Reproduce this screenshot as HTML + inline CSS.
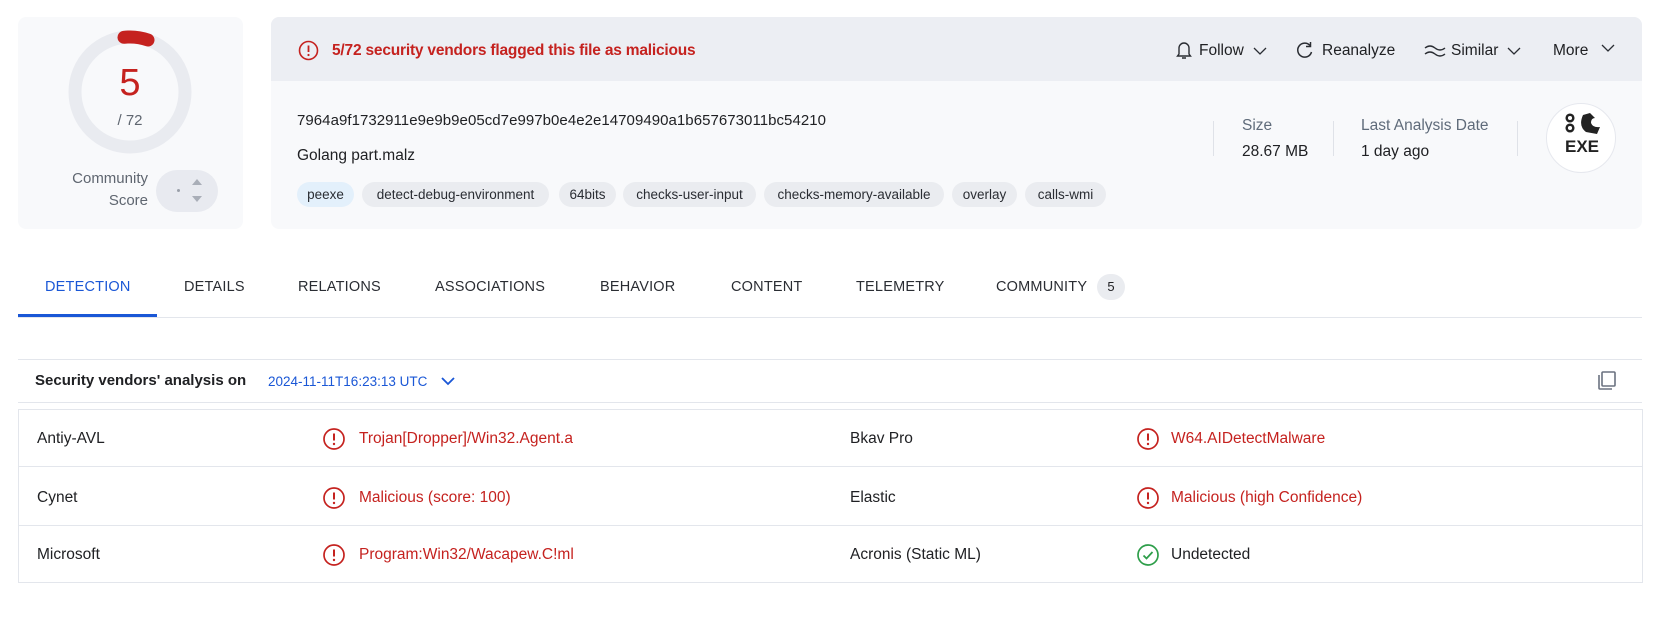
<!DOCTYPE html>
<html><head><meta charset="utf-8"><style>
*{margin:0;padding:0;box-sizing:border-box}
body{width:1662px;height:630px;background:#fff;font-family:"Liberation Sans",sans-serif;color:#202124;position:relative;overflow:hidden;font-size:14.5px}
.a{position:absolute;white-space:nowrap}
.card{position:absolute;background:#f8f9fb;border-radius:8px}
.tag{position:absolute;top:182px;height:25px;line-height:25px;border-radius:13px;background:#eaecf0;font-size:13.5px;text-align:center;color:#2a2d33}
.tab{position:absolute;top:279px;font-size:14.5px;color:#2a2d33;letter-spacing:.2px}
.hl{position:absolute;height:1px;background:#e3e6ec}
.red{color:#c5221f}
</style></head><body>

<div class="card" style="left:18px;top:17px;width:225px;height:212px"></div>
<svg class="a" style="left:60px;top:22px" width="140" height="140" viewBox="0 0 140 140">
<circle cx="70" cy="70" r="55" fill="none" stroke="#e9ebf0" stroke-width="13"/>
<path d="M64 15.3 A55 55 0 0 1 88 18" fill="none" stroke="#c5221f" stroke-width="13" stroke-linecap="round"/>
</svg>
<div class="a red" style="left:110px;top:62px;width:40px;text-align:center;font-size:38px">5</div>
<div class="a" style="left:110px;top:112px;width:40px;text-align:center;font-size:15px;color:#5f6670">/ 72</div>
<div class="a" style="left:50px;top:168px;width:98px;text-align:right;font-size:15px;color:#5f6670;line-height:22px;white-space:normal">Community<br>Score</div>
<div class="a" style="left:156px;top:170px;width:62px;height:42px;border-radius:21px;background:#e8eaf0"></div>
<div class="a" style="left:177px;top:189px;width:3px;height:3px;border-radius:2px;background:#9aa0aa"></div>
<svg class="a" style="left:190px;top:176px" width="14" height="30"><path d="M2 9 L7 3 L12 9Z M2 20 L7 26 L12 20Z" fill="#a9aeb8"/></svg>

<div class="card" style="left:271px;top:17px;width:1371px;height:212px"></div>
<div class="a" style="left:271px;top:17px;width:1371px;height:64px;background:#eceef3;border-radius:8px 8px 0 0"></div>
<svg class="a" style="left:298px;top:40px" width="21" height="21" viewBox="0 0 21 21"><circle cx="10.5" cy="10.5" r="9" fill="none" stroke="#c5221f" stroke-width="1.6"/><path d="M10.5 5.5v6.5" stroke="#c5221f" stroke-width="1.8"/><circle cx="10.5" cy="15" r="1.1" fill="#c5221f"/></svg>
<div class="a red" style="left:332px;top:42px;font-size:15.5px;font-weight:bold;letter-spacing:-.2px">5/72 security vendors flagged this file as malicious</div>

<svg class="a" style="left:1175px;top:40px" width="18" height="20" viewBox="0 0 18 20"><path d="M4 14V8a5 5 0 0 1 10 0v6l1.5 2h-13z M7 18h4" fill="none" stroke="#2a2d33" stroke-width="1.4"/></svg>
<div class="a" style="left:1199px;top:42px;font-size:15.5px">Follow</div>
<svg class="a" style="left:1252px;top:45px" width="16" height="12"><path d="M2 3l6 6 6-6" fill="none" stroke="#2a2d33" stroke-width="1.3"/></svg>
<svg class="a" style="left:1295px;top:40px" width="20" height="20" viewBox="0 0 20 20"><path d="M15 5.5A7 7 0 1 0 16.5 12" fill="none" stroke="#2a2d33" stroke-width="1.5"/><path d="M15.5 2v4.5H11" fill="none" stroke="#2a2d33" stroke-width="1.5"/></svg>
<div class="a" style="left:1322px;top:42px;font-size:15.5px">Reanalyze</div>
<svg class="a" style="left:1424px;top:43px" width="22" height="16"><path d="M1 5q5-4 10 0t10 0M1 11q5-4 10 0t10 0" fill="none" stroke="#2a2d33" stroke-width="1.4"/></svg>
<div class="a" style="left:1451px;top:42px;font-size:15.5px">Similar</div>
<svg class="a" style="left:1506px;top:45px" width="16" height="12"><path d="M2 3l6 6 6-6" fill="none" stroke="#2a2d33" stroke-width="1.3"/></svg>
<div class="a" style="left:1553px;top:42px;font-size:15.5px">More</div>
<svg class="a" style="left:1600px;top:42px" width="16" height="12"><path d="M2 3l6 6 6-6" fill="none" stroke="#2a2d33" stroke-width="1.3"/></svg>

<div class="a" style="left:297px;top:112px;font-size:15px;letter-spacing:.05px">7964a9f1732911e9e9b9e05cd7e997b0e4e2e14709490a1b657673011bc54210</div>
<div class="a" style="left:297px;top:147px;font-size:15.5px">Golang part.malz</div>
<div class="tag" style="left:297px;width:57px;background:#e3f0fb">peexe</div>
<div class="tag" style="left:362px;width:187px">detect-debug-environment</div>
<div class="tag" style="left:559px;width:57px">64bits</div>
<div class="tag" style="left:623px;width:133px">checks-user-input</div>
<div class="tag" style="left:764px;width:180px">checks-memory-available</div>
<div class="tag" style="left:952px;width:65px">overlay</div>
<div class="tag" style="left:1025px;width:81px">calls-wmi</div>

<div class="a" style="left:1213px;top:121px;width:1px;height:35px;background:#dfe2e8"></div>
<div class="a" style="left:1333px;top:121px;width:1px;height:35px;background:#dfe2e8"></div>
<div class="a" style="left:1517px;top:121px;width:1px;height:35px;background:#dfe2e8"></div>
<div class="a" style="left:1242px;top:117px;font-size:15.5px;color:#5f6b7a">Size</div>
<div class="a" style="left:1242px;top:143px;font-size:15.5px">28.67 MB</div>
<div class="a" style="left:1361px;top:117px;font-size:15.5px;color:#5f6b7a">Last Analysis Date</div>
<div class="a" style="left:1361px;top:143px;font-size:15.5px">1 day ago</div>
<div class="a" style="left:1546px;top:103px;width:70px;height:70px;border-radius:50%;background:#fff;border:1px solid #e6e8ee"></div>
<svg class="a" style="left:1560px;top:112px" width="44" height="26" viewBox="0 0 44 26"><circle cx="10" cy="6" r="3.3" fill="none" stroke="#222" stroke-width="2.5"/><circle cx="10" cy="16" r="3.3" fill="none" stroke="#222" stroke-width="2.5"/><path d="M23 3 Q18 14 26 20 L37 22 L40 15 Q33 16 31 11 Q31 6 35 6 L30 1Z" fill="#222"/></svg>
<div class="a" style="left:1560px;top:137px;width:44px;text-align:center;font-size:17px;font-weight:bold;color:#222">EXE</div>

<div class="tab" style="left:45px;color:#1a57d6">DETECTION</div>
<div class="tab" style="left:184px">DETAILS</div>
<div class="tab" style="left:298px">RELATIONS</div>
<div class="tab" style="left:435px">ASSOCIATIONS</div>
<div class="tab" style="left:600px">BEHAVIOR</div>
<div class="tab" style="left:731px">CONTENT</div>
<div class="tab" style="left:856px">TELEMETRY</div>
<div class="tab" style="left:996px">COMMUNITY</div>
<div class="a" style="left:1097px;top:274px;width:28px;height:26px;border-radius:13px;background:#eaecf0;text-align:center;line-height:26px;font-size:13px">5</div>
<div class="hl" style="left:18px;top:317px;width:1624px"></div>
<div class="a" style="left:18px;top:314px;width:139px;height:3px;background:#1a57d6"></div>

<div class="hl" style="left:18px;top:359px;width:1624px"></div>
<div class="a" style="left:35px;top:372px;font-size:15px;font-weight:bold">Security vendors' analysis on</div>
<div class="a" style="left:268px;top:374px;font-size:13.5px;color:#1a57d6">2024-11-11T16:23:13 UTC</div>
<svg class="a" style="left:440px;top:375px" width="16" height="12"><path d="M2 3l6 6 6-6" fill="none" stroke="#1a57d6" stroke-width="1.8"/></svg>
<svg class="a" style="left:1596px;top:370px" width="22" height="22" viewBox="0 0 22 22"><rect x="6" y="2" width="13" height="14" rx="1" fill="none" stroke="#6b7280" stroke-width="1.6"/><path d="M3 5v13a1 1 0 0 0 1 1h12" fill="none" stroke="#6b7280" stroke-width="1.6"/></svg>
<div class="hl" style="left:18px;top:402px;width:1624px"></div>

<div class="a" style="left:18px;top:409px;width:1625px;height:174px;border:1px solid #e3e6ec;border-bottom:none"></div>
<div class="hl" style="left:18px;top:466px;width:1625px"></div>
<div class="hl" style="left:18px;top:525px;width:1625px"></div>
<div class="hl" style="left:18px;top:582px;width:1625px"></div>

<div class="a" style="left:37px;top:430px;font-size:15.5px">Antiy-AVL</div>
<div class="a" style="left:37px;top:489px;font-size:15.5px">Cynet</div>
<div class="a" style="left:37px;top:546px;font-size:15.5px">Microsoft</div>
<div class="a" style="left:850px;top:430px;font-size:15.5px">Bkav Pro</div>
<div class="a" style="left:850px;top:489px;font-size:15.5px">Elastic</div>
<div class="a" style="left:850px;top:546px;font-size:15.5px">Acronis (Static ML)</div>

<svg class="a" style="left:322px;top:427px" width="24" height="24" viewBox="0 0 24 24"><circle cx="12" cy="12" r="10" fill="none" stroke="#c5221f" stroke-width="1.7"/><path d="M12 6.5v7" stroke="#c5221f" stroke-width="2"/><circle cx="12" cy="17" r="1.2" fill="#c5221f"/></svg>
<svg class="a" style="left:322px;top:486px" width="24" height="24" viewBox="0 0 24 24"><circle cx="12" cy="12" r="10" fill="none" stroke="#c5221f" stroke-width="1.7"/><path d="M12 6.5v7" stroke="#c5221f" stroke-width="2"/><circle cx="12" cy="17" r="1.2" fill="#c5221f"/></svg>
<svg class="a" style="left:322px;top:543px" width="24" height="24" viewBox="0 0 24 24"><circle cx="12" cy="12" r="10" fill="none" stroke="#c5221f" stroke-width="1.7"/><path d="M12 6.5v7" stroke="#c5221f" stroke-width="2"/><circle cx="12" cy="17" r="1.2" fill="#c5221f"/></svg>
<svg class="a" style="left:1136px;top:427px" width="24" height="24" viewBox="0 0 24 24"><circle cx="12" cy="12" r="10" fill="none" stroke="#c5221f" stroke-width="1.7"/><path d="M12 6.5v7" stroke="#c5221f" stroke-width="2"/><circle cx="12" cy="17" r="1.2" fill="#c5221f"/></svg>
<svg class="a" style="left:1136px;top:486px" width="24" height="24" viewBox="0 0 24 24"><circle cx="12" cy="12" r="10" fill="none" stroke="#c5221f" stroke-width="1.7"/><path d="M12 6.5v7" stroke="#c5221f" stroke-width="2"/><circle cx="12" cy="17" r="1.2" fill="#c5221f"/></svg>
<svg class="a" style="left:1136px;top:543px" width="24" height="24" viewBox="0 0 24 24"><circle cx="12" cy="12" r="10" fill="none" stroke="#2e9e4a" stroke-width="1.7"/><path d="M7.5 12.5l3 3 6-6.5" fill="none" stroke="#2e9e4a" stroke-width="1.8"/></svg>

<div class="a red" style="left:359px;top:430px;font-size:15.5px">Trojan[Dropper]/Win32.Agent.a</div>
<div class="a red" style="left:359px;top:489px;font-size:15.5px">Malicious (score: 100)</div>
<div class="a red" style="left:359px;top:546px;font-size:15.5px">Program:Win32/Wacapew.C!ml</div>
<div class="a red" style="left:1171px;top:430px;font-size:15.5px">W64.AIDetectMalware</div>
<div class="a red" style="left:1171px;top:489px;font-size:15.5px">Malicious (high Confidence)</div>
<div class="a" style="left:1171px;top:546px;font-size:15.5px">Undetected</div>
</body></html>
